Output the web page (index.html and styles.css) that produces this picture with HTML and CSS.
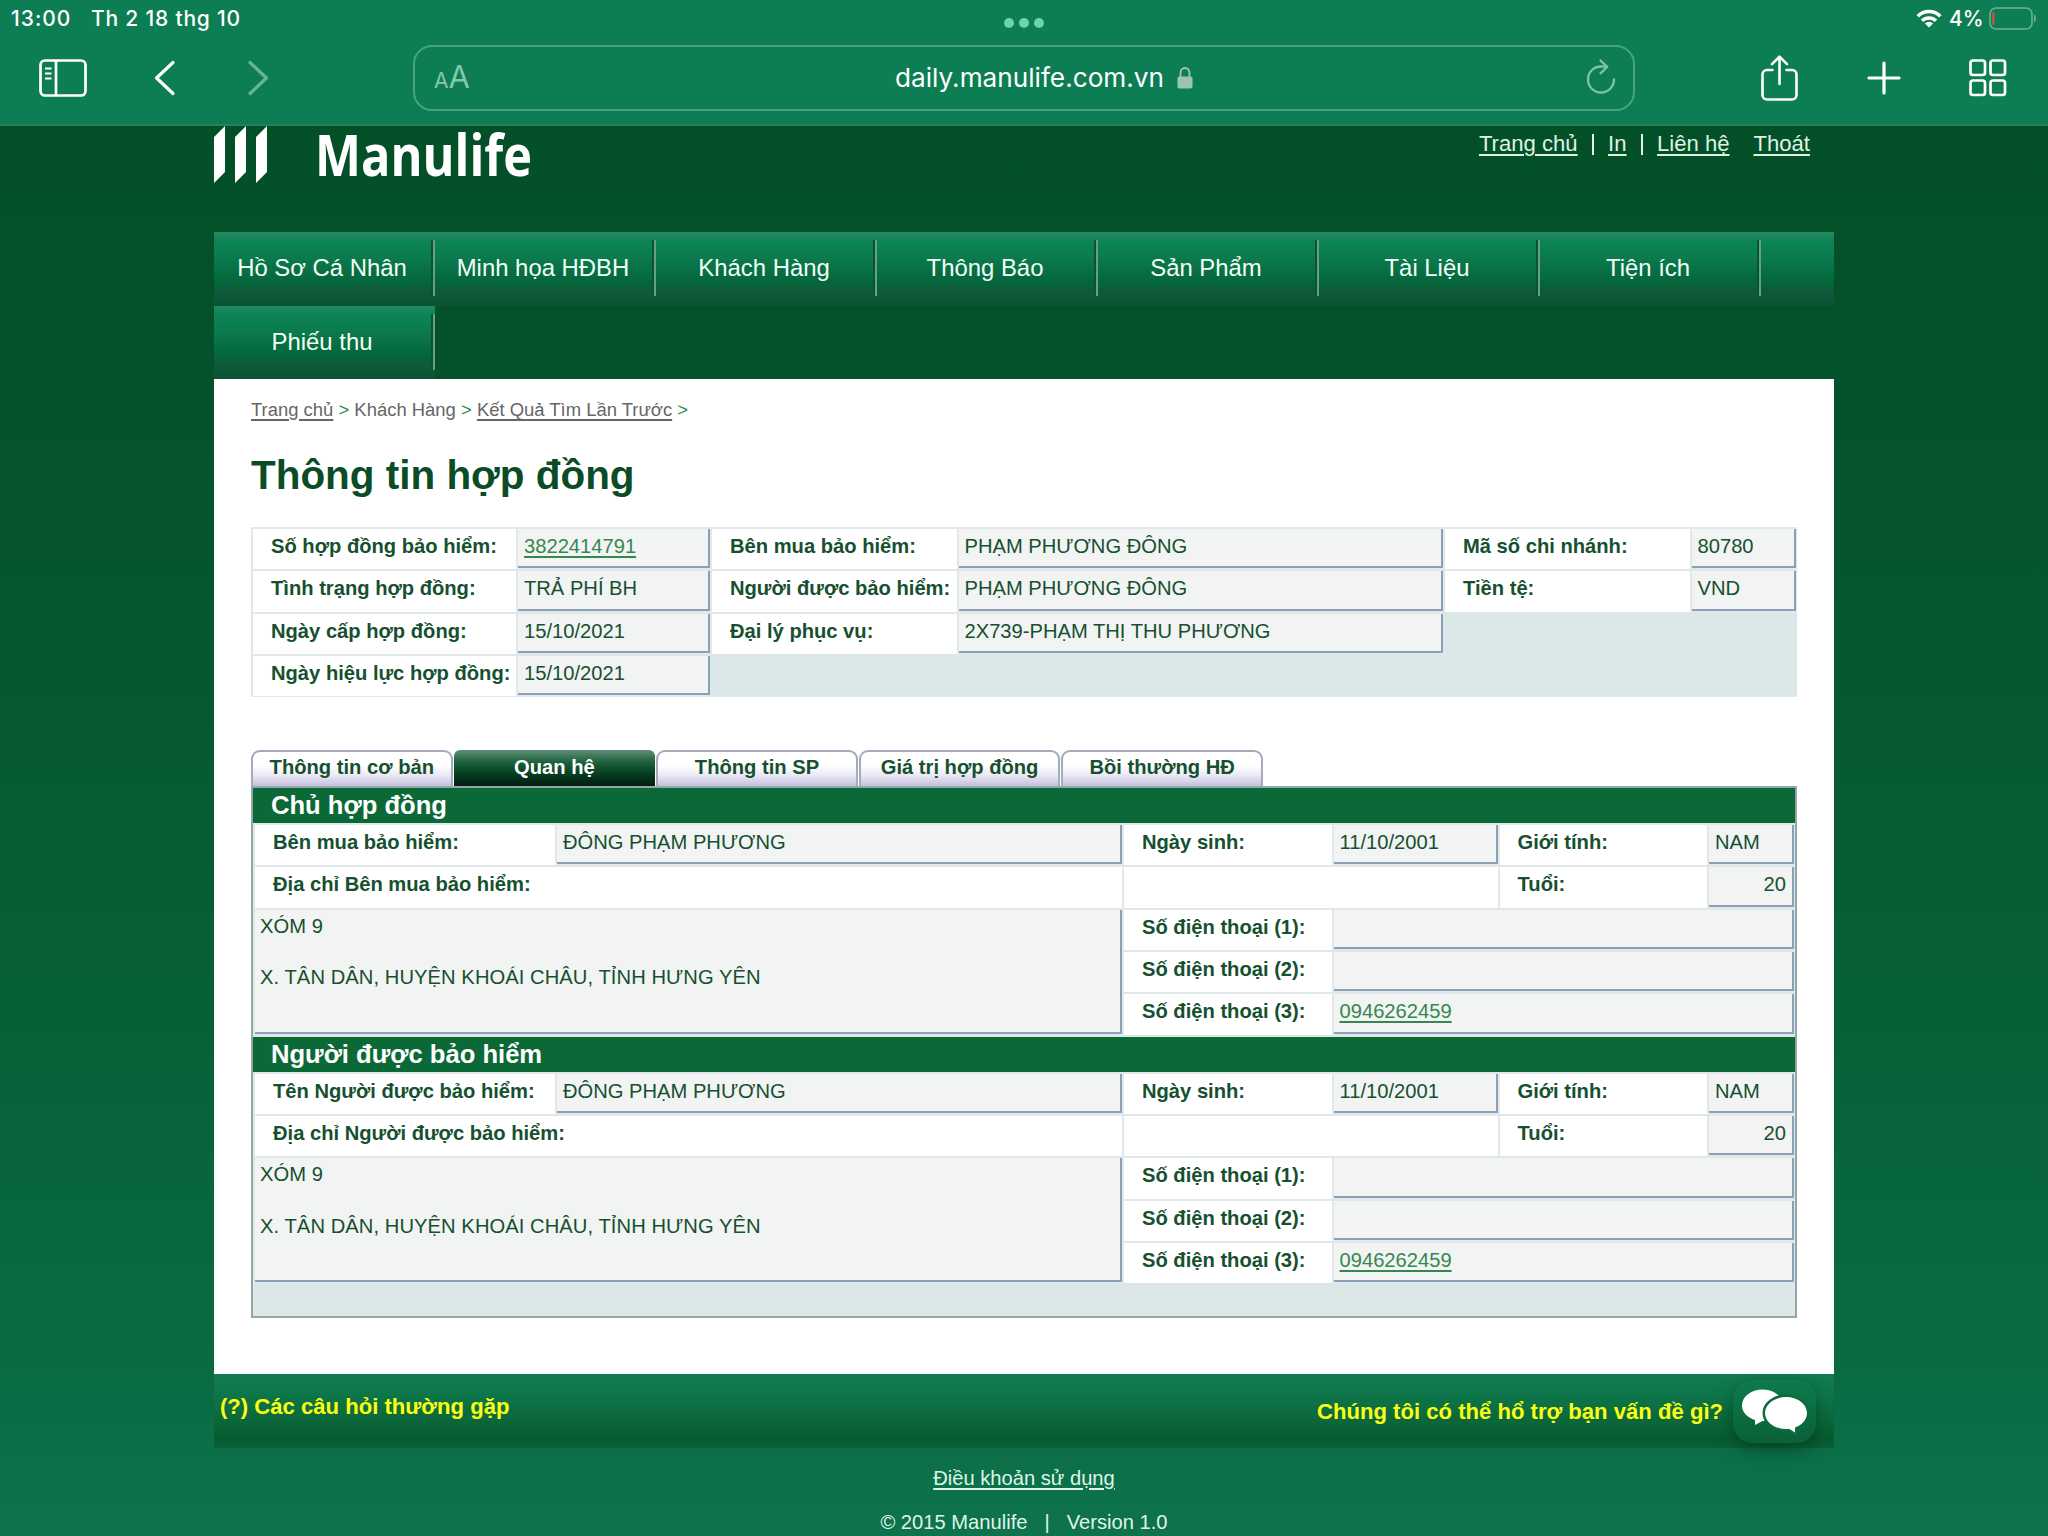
FILE: index.html
```html
<!DOCTYPE html>
<html lang="vi">
<head>
<meta charset="utf-8">
<title>Thông tin hợp đồng</title>
<link rel="stylesheet" href="styles.css">
</head>
<body>
<header class="chrome">
  <div class="status">
    <span class="time">13:00</span>
    <span class="date">Th 2 18 thg 10</span>
    <span class="dots"><i></i><i></i><i></i></span>
    <svg class="wifi" width="26" height="19" viewBox="0 0 26 19" fill="none" stroke="#fff" stroke-width="3.6"><path d="M1.7 7.2a16 16 0 0 1 22.6 0"/><path d="M6 11.8a10 10 0 0 1 14 0"/><path d="M13 18.6l-4.1-4.1a5.8 5.8 0 0 1 8.2 0z" fill="#fff" stroke="none"/></svg>
    <span class="pct">4%</span>
    <svg class="battery" width="48" height="23" viewBox="0 0 48 23"><rect x="1" y="1" width="42" height="21" rx="6" fill="none" stroke="#6bb294" stroke-width="1.6"/><rect x="3.4" y="5" width="2" height="13" rx="1" fill="#e0503c"/><path d="M45 7.5c2.6 1 2.6 7 0 8z" fill="#6bb294"/></svg>
  </div>
  <div class="toolbar">
    <svg class="ic-side" width="48" height="38" viewBox="0 0 48 38" fill="none" stroke="#fff" stroke-width="2.7"><rect x="1.5" y="1.500" width="45" height="35" rx="4.500"/><path d="M17 1.500v35"/><path d="M6 9.500h6.500M6 14.500h6.500M6 19.500h6.500" stroke-width="2"/></svg>
    <svg class="ic-back" width="22" height="36" viewBox="0 0 22 36" fill="none" stroke="#fff" stroke-width="3.2" stroke-linecap="round" stroke-linejoin="round"><path d="M19 2.500L2.500 18L19 33.500"/></svg>
    <svg class="ic-fwd" width="22" height="36" viewBox="0 0 22 36" fill="none" stroke="#66b593" stroke-width="3.2" stroke-linecap="round" stroke-linejoin="round"><path d="M3 2.500L19.500 18L3 33.500"/></svg>
    <div class="urlbox">
      <span class="aa"><small>A</small>A</span>
      <span class="url">daily.manulife.com.vn</span>
      <svg class="lock" width="16" height="22" viewBox="0 0 16 22"><rect x="0.500" y="9.500" width="15" height="12" rx="2" fill="#9bc4b4"/><path d="M3.500 10V6a4.500 5 0 0 1 9 0v4" fill="none" stroke="#9bc4b4" stroke-width="1.9"/></svg>
      <svg class="reload" width="30" height="36" viewBox="0 0 30 36" fill="none" stroke="#7fc3a5" stroke-width="2.3" stroke-linecap="round" stroke-linejoin="round"><path d="M28 20.500A13 13 0 1 1 15 7.500l6 .2"/><path d="M14.500 1.500l6.700 6.300l-6.700 6.500"/></svg>
    </div>
    <svg class="ic-share" width="37" height="46" viewBox="0 0 37 46" fill="none" stroke="#fff" stroke-width="2.600" stroke-linecap="round" stroke-linejoin="round"><path d="M11.500 15H6a4.500 4.500 0 0 0-4.500 4.500V40A4.500 4.500 0 0 0 6 44.500h25a4.500 4.500 0 0 0 4.500-4.500V19.500A4.500 4.500 0 0 0 31 15h-5.500"/><path d="M18.500 29V2M11 9.200L18.500 1.700L26 9.200"/></svg>
    <svg class="ic-plus" width="34" height="34" viewBox="0 0 34 34" stroke="#fff" stroke-width="3.200" stroke-linecap="round"><path d="M17 2v30M2 17h30"/></svg>
    <svg class="ic-grid" width="38" height="38" viewBox="0 0 38 38" fill="none" stroke="#fff" stroke-width="2.700"><rect x="1.500" y="1.500" width="14.500" height="14.500" rx="2.500"/><rect x="21.500" y="1.500" width="14.500" height="14.500" rx="2.500"/><rect x="1.500" y="21.500" width="14.500" height="14.500" rx="2.500"/><rect x="21.500" y="21.500" width="14.500" height="14.500" rx="2.500"/></svg>
  </div>
</header>

<div class="wrap">
  <div class="masthead">
    <svg class="logo" width="330" height="80" viewBox="0 0 330 80" fill="#fff"><path d="M0 11L11 0V46L0 57zM21 11L32 0V46L21 57zM42 11L53 0V46L42 57z"/><text class="logotext" x="101" y="49.500" textLength="217" lengthAdjust="spacingAndGlyphs">Manulife</text></svg>
    <div class="toplinks"><a>Trang chủ</a><b></b><a>In</a><b></b><a>Liên hệ</a><a class="exit">Thoát</a></div>
  </div>
  <nav class="nav">
    <div class="navrow full"><span>Hồ Sơ Cá Nhân</span><span>Minh họa HĐBH</span><span>Khách Hàng</span><span>Thông Báo</span><span>Sản Phẩm</span><span>Tài Liệu</span><span>Tiện ích</span></div>
    <div class="navrow single"><span>Phiếu thu</span></div>
  </nav>

  <main class="page">
    <div class="crumbs"><a>Trang chủ</a> <i>&gt;</i> Khách Hàng <i>&gt;</i> <a>Kết Quả Tìm Lần Trước</a> <i>&gt;</i></div>
    <h1>Thông tin hợp đồng</h1>

    <div class="summary">
      <div class="l">Số hợp đồng bảo hiểm:</div><div class="v"><a>3822414791</a></div><div class="l">Bên mua bảo hiểm:</div><div class="v">PHẠM PHƯƠNG ĐÔNG</div><div class="l">Mã số chi nhánh:</div><div class="v">80780</div>
      <div class="l">Tình trạng hợp đồng:</div><div class="v">TRẢ PHÍ BH</div><div class="l">Người được bảo hiểm:</div><div class="v">PHẠM PHƯƠNG ĐÔNG</div><div class="l">Tiền tệ:</div><div class="v">VND</div>
      <div class="l">Ngày cấp hợp đồng:</div><div class="v">15/10/2021</div><div class="l">Đại lý phục vụ:</div><div class="v">2X739-PHẠM THỊ THU PHƯƠNG</div><div class="e"></div>
      <div class="l">Ngày hiệu lực hợp đồng:</div><div class="v">15/10/2021</div>
    </div>

    <div class="tabs"><span>Thông tin cơ bản</span><span class="on">Quan hệ</span><span>Thông tin SP</span><span>Giá trị hợp đồng</span><span>Bồi thường HĐ</span></div>
    <div class="panel">
      <section>
        <h2>Chủ hợp đồng</h2>
        <div class="person">
          <div class="l">Bên mua bảo hiểm:</div><div class="v">ĐÔNG PHẠM PHƯƠNG</div><div class="l">Ngày sinh:</div><div class="v">11/10/2001</div><div class="l">Giới tính:</div><div class="v">NAM</div>
          <div class="l w2">Địa chỉ Bên mua bảo hiểm:</div><div class="l w2"></div><div class="l">Tuổi:</div><div class="v num">20</div>
          <div class="v addr">XÓM 9<br><br>X. TÂN DÂN, HUYỆN KHOÁI CHÂU, TỈNH HƯNG YÊN</div>
          <div class="l">Số điện thoại (1):</div><div class="v w3"></div>
          <div class="l">Số điện thoại (2):</div><div class="v w3"></div>
          <div class="l">Số điện thoại (3):</div><div class="v w3"><a>0946262459</a></div>
        </div>
      </section>
      <section>
        <h2>Người được bảo hiểm</h2>
        <div class="person">
          <div class="l">Tên Người được bảo hiểm:</div><div class="v">ĐÔNG PHẠM PHƯƠNG</div><div class="l">Ngày sinh:</div><div class="v">11/10/2001</div><div class="l">Giới tính:</div><div class="v">NAM</div>
          <div class="l w2">Địa chỉ Người được bảo hiểm:</div><div class="l w2"></div><div class="l">Tuổi:</div><div class="v num">20</div>
          <div class="v addr">XÓM 9<br><br>X. TÂN DÂN, HUYỆN KHOÁI CHÂU, TỈNH HƯNG YÊN</div>
          <div class="l">Số điện thoại (1):</div><div class="v w3"></div>
          <div class="l">Số điện thoại (2):</div><div class="v w3"></div>
          <div class="l">Số điện thoại (3):</div><div class="v w3"><a>0946262459</a></div>
        </div>
      </section>
    </div>
  </main>

  <div class="helpbar">
    <span class="faq">(?) Các câu hỏi thường gặp</span>
    <span class="ask">Chúng tôi có thể hổ trợ bạn vấn đề gì?</span>
    <span class="chat"><svg width="68" height="46" viewBox="0 0 68 46" fill="#fff"><path d="M21.500 0.500C33 0.500 42 7.500 42 16.500S33 32 21.500 32L14 36V31C6 28.500 1 23 1 16.500C1 7.500 10 0.500 21.500 0.500z"/><path d="M45 8C56.500 8 66 15 66 24C66 31 60 36.500 54 38.500V43.500L48.500 40H45C33.500 40 24 33 24 24S33.500 8 45 8z" stroke="#0a6b3f" stroke-width="5"/><path d="M45 8C56.500 8 66 15 66 24C66 31 60 36.500 54 38.500V43.500L48.500 40H45C33.500 40 24 33 24 24S33.500 8 45 8z"/></svg></span>
  </div>
  <footer class="foot"><a>Điều khoản sử dụng</a><p><span>© 2015 Manulife</span><span>|</span><span>Version 1.0</span></p></footer>
</div>
</body>
</html>
```
FILE: styles.css
```css
* { box-sizing: border-box; }
body {
  margin: 0; width: 2048px; height: 1536px; overflow: hidden;
  font: 20.16px/24px "Liberation Sans", Arial, sans-serif;
  color: #16502f;
  background: linear-gradient(#035028 125px, #04522b 400px, #066036 1000px, #0a6c44 1400px, #0e734c 1536px);
}
a { text-decoration: underline; text-underline-offset: 3px; text-decoration-thickness: 1.6px; }
svg { display: block; flex: none; }

.chrome { height: 126px; background: #0d7e53; border-bottom: 2px solid #268059; font-family: Inter, sans-serif; color: #fff; }
.status { height: 37px; display: flex; align-items: center; padding-left: 11px; font-size: 21px; font-weight: 500; white-space: nowrap; }
.time { width: 80px; letter-spacing: 1px; }
.date { width: 913px; letter-spacing: .8px; }
.dots { display: flex; gap: 5px; width: 912px; padding-top: 8px; }
.dots i { width: 10px; height: 10px; border-radius: 50%; background: #6fd3ac; }
.pct { margin-left: 7px; width: 40px; }
.toolbar { display: flex; align-items: center; height: 81px; }
.ic-side { margin-left: 39px; }
.ic-back { margin-left: 67px; }
.ic-fwd { margin-left: 71px; }
.urlbox { margin-left: 144px; width: 1222px; height: 66px; border: 2px solid #49a27e; border-radius: 19px; display: flex; align-items: center; padding-left: 19px; }
.aa { width: 461px; padding-top: 2px; color: #84c8aa; font-size: 31px; line-height: 36px; }
.aa small { font-size: 21px; }
.url { width: 282px; font-size: 26.2px; line-height: 34px; }
.lock { margin-top: 1px; }
.reload { margin: 0 0 2px 393px; }
.ic-share { margin-left: 126px; }
.ic-plus { margin-left: 69px; }
.ic-grid { margin-left: 68px; }

.wrap { width: 1620px; margin: 0 auto; }
.masthead { height: 106px; display: flex; justify-content: space-between; padding-right: 24px; }
.logo { overflow: visible; }
.logotext { font-family: "Open Sans", sans-serif; font-size: 58px; font-weight: 700; }
.toplinks { display: flex; align-items: center; height: 36px; font-size: 22.1px; color: #dff3e4; white-space: nowrap; }
.toplinks b { width: 1.5px; height: 21px; background: #dff3e4; margin: 0 14.5px; }
.exit { margin-left: 24px; }

.navrow { display: flex; height: 73.5px; font-size: 23.9px; color: #f2fff6; background: linear-gradient(#258a61, #0c8456 12%, #0b7a4d 35%, #04663b 68%, #0f5a39 80%, #0b5433); }
.navrow span { width: 221px; height: 56px; margin-top: 8px; padding: 16px 3px 0 0; border-right: 2px solid #64a27c; box-shadow: inset -2px 0 #0a5434; text-align: center; white-space: nowrap; }
.single { width: 221px; }

.page { height: 995px; background: #fff; padding: 19px 37px 0; }
.crumbs { height: 24px; font-size: 18.45px; color: #666; white-space: nowrap; }
.crumbs i { font-style: normal; color: #2f8a4c; }
h1 { margin: 28.5px 0 0; font-size: 40.45px; line-height: 48px; color: #0b4c27; }

.l, .v { border: solid #e1e8e7; border-width: 2px 0 0 2px; padding: 5px 0 0 6px; white-space: nowrap; }
.l { background: #fff; font-weight: bold; padding-left: 18px; }
.v { background: linear-gradient(#8a9fb8, #8a9fb8) right top / 2px calc(100% - 1px) no-repeat, linear-gradient(#8a9fb8, #8a9fb8) right bottom 1px / 100% 2px no-repeat, #f2f3f3; box-shadow: inset 0 -1px #e0eaf2; }
.v a { color: #36874f; }
.summary { margin-top: 28.5px; display: grid; grid-template-columns: 265px 194px 246.500px 486.500px 246.500px 106px; grid-template-rows: repeat(4, 42.330px); background: #dce7e7; width: 1546px; border-bottom: 1px solid #e1e8e7; }
.e { grid-column: span 2; }

.tabs { margin-top: 53px; display: flex; gap: 1px; height: 36px; }
.tabs span { width: 201.600px; padding-top: 3px; border: 2px solid #a3acbb; border-bottom: 0; border-radius: 9px 9px 0 0; background: linear-gradient(#fff 40%, #e9e6f5 70%, #c5c0dc); text-align: center; font-weight: bold; }
.tabs .on { border: 0; padding-top: 5px; color: #fff; border-radius: 6px 6px 0 0; background: linear-gradient(#5f8f76, #1c603c 35%, #063f20 65%, #031c10); }
.panel { width: 1546px; height: 532px; border: 2px solid #93a6a8; background: #dce7e7; }
h2 { margin: 0; height: 34.800px; background: #0b6938; color: #fff; font-size: 25.600px; line-height: 34px; padding-left: 18px; }
section { height: 248.500px; }
.person { display: grid; grid-template-columns: 302px 567px 209.500px 166px 209.500px 87px; grid-template-rows: repeat(5, 42.350px); }
.w2 { grid-column: span 2; }
.w3 { grid-column: span 3; }
.v.addr { grid-column: span 2; grid-row: span 3; line-height: 25.800px; padding: 4px 0 0 5px; letter-spacing: .07px; }
.num { text-align: right; padding-right: 8px; }

.helpbar { height: 73.500px; display: flex; color: #fbff14; font-weight: bold; font-size: 22.100px; background: linear-gradient(#137b51, #0d7549 30%, #0b6639 65%, #045c30 88%, #0a6038); white-space: nowrap; }
.faq { margin: 21px 0 0 6px; width: 1097px; }
.ask { margin-top: 26px; width: 416px; }
.chat { width: 83px; height: 63px; margin-top: 6px; border-radius: 20px; display: flex; align-items: center; justify-content: center; background: linear-gradient(#0d7b4d, #0a6036); box-shadow: 0 6px 16px rgba(0, 50, 20, .55); }
.foot { text-align: center; color: #dff5e8; padding-top: 18px; }
.foot p { margin: 20px 0 0; display: flex; justify-content: center; gap: 17px; }
```
